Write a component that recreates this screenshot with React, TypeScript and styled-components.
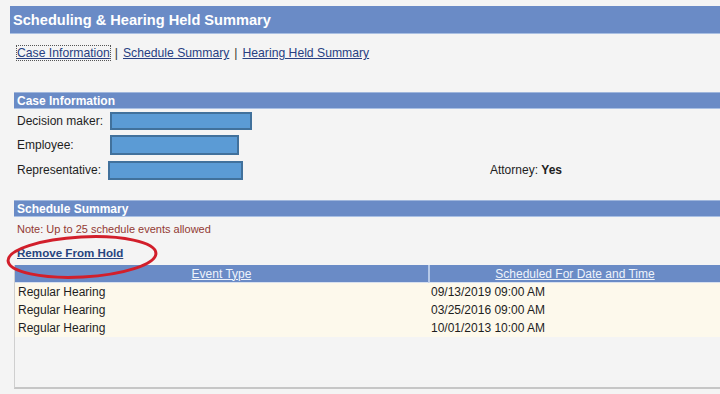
import React from "react";
import styled, { createGlobalStyle } from "styled-components";

const Global = createGlobalStyle`
  html, body { margin: 0; padding: 0; background: #f6f6f6; }
  body { font-family: "Liberation Sans", Arial, sans-serif; color: #222; }
  #root { width: 720px; height: 394px; overflow: hidden; }
`;

const Page = styled.div`
  position: relative;
  width: 720px;
  height: 394px;
  padding: 6px 0 0 10px;
  box-sizing: border-box;
  background: #f4f4f4;
`;

const TitleBar = styled.div`
  height: 28px;
  background: #6a8bc6;
  border-bottom: 1px solid #a9bfe2;
  box-sizing: border-box;
  display: flex;
  align-items: center;
  padding-left: 3px;
  color: #fff;
  font-weight: bold;
  font-size: 14.6px;
`;

const Nav = styled.div`
  margin: 12px 0 0 7px;
  height: 14px;
  display: flex;
  align-items: center;
  gap: 5px;
  font-size: 12.2px;
  color: #333;
`;

const NavLink = styled.a<{ $focused?: boolean }>`
  color: #283f82;
  text-decoration: underline;
  outline: ${(p) => (p.$focused ? "1px dotted #555" : "none")};
  cursor: pointer;
`;

const Body = styled.div`
  margin-left: 4px;
`;

const SectionHeader = styled.div<{ $top: number }>`
  margin-top: ${(p) => p.$top}px;
  height: 17px;
  background: #6a8bc6;
  border-top: 1px solid #9fb6dc;
  border-bottom: 1px solid #a9c0e4;
  box-sizing: border-box;
  display: flex;
  align-items: center;
  padding-left: 3px;
  color: #fff;
  font-weight: bold;
  font-size: 12px;
`;

const FieldRow = styled.div<{ $h: number }>`
  height: ${(p) => p.$h}px;
  display: flex;
  align-items: center;
  padding-left: 3px;
  font-size: 12px;
  color: #1e1e1e;
`;

const Label = styled.span<{ $w: number }>`
  width: ${(p) => p.$w}px;
  flex: none;
`;

const Redacted = styled.div<{ $w: number; $h: number }>`
  width: ${(p) => p.$w}px;
  height: ${(p) => p.$h}px;
  background: #5b9bd5;
  border: 2px solid #41719c;
  box-sizing: border-box;
  flex: none;
`;

const Attorney = styled.span`
  margin-left: auto;
  margin-right: 158px;
  b { font-weight: bold; }
`;

const Note = styled.div`
  margin-top: 5px;
  height: 14px;
  padding-left: 3px;
  font-size: 11px;
  color: #933a33;
  display: flex;
  align-items: center;
`;

const ActionLink = styled.a`
  display: block;
  width: max-content;
  margin: 9px 0 0 3px;
  font-size: 11.6px;
  font-weight: bold;
  color: #27457f;
  text-decoration: underline;
  height: 15px;
  line-height: 15px;
`;

const TablePanel = styled.div`
  margin-top: 5px;
  height: 124px;
  border-left: 1px solid #cfcfcf;
  border-bottom: 2px solid #c6c6c6;
  box-sizing: border-box;
`;

const Table = styled.div`
  display: grid;
  grid-template-columns: 413px 1fr;
`;

const HeadCell = styled.div<{ $divider?: boolean }>`
  height: 18px;
  background: #6a8bc6;
  border-left: ${(p) => (p.$divider ? "2px solid #b6c9e8" : "none")};
  border-bottom: 1px solid #d7e0ef;
  box-sizing: border-box;
  display: flex;
  align-items: center;
  justify-content: center;
  font-size: 12px;
  color: #eef3fb;
  text-decoration: underline;
`;

const Cell = styled.div<{ $pad: number }>`
  height: 18px;
  background: #fdf9ec;
  display: flex;
  align-items: center;
  padding-left: ${(p) => p.$pad}px;
  font-size: 12px;
  color: #1e1e1e;
`;

const Circle = styled.svg`
  position: absolute;
  left: 4px;
  top: 232px;
  pointer-events: none;
`;

const rows = [
  ["Regular Hearing", "09/13/2019 09:00 AM"],
  ["Regular Hearing", "03/25/2016 09:00 AM"],
  ["Regular Hearing", "10/01/2013 10:00 AM"],
];

export default function App() {
  return (
    <>
      <Global />
      <Page>
        <TitleBar>Scheduling &amp; Hearing Held Summary</TitleBar>
        <Nav>
          <NavLink $focused>Case Information</NavLink>|
          <NavLink>Schedule Summary</NavLink>|
          <NavLink>Hearing Held Summary</NavLink>
        </Nav>
        <Body>
          <SectionHeader $top={32}>Case Information</SectionHeader>
          <FieldRow $h={24}>
            <Label $w={93}>Decision maker:</Label>
            <Redacted $w={142} $h={18} />
          </FieldRow>
          <FieldRow $h={24}>
            <Label $w={93}>Employee:</Label>
            <Redacted $w={129} $h={20} />
          </FieldRow>
          <FieldRow $h={26}>
            <Label $w={91}>Representative:</Label>
            <Redacted $w={135} $h={19} />
            <Attorney>
              Attorney: <b>Yes</b>
            </Attorney>
          </FieldRow>
          <SectionHeader $top={17}>Schedule Summary</SectionHeader>
          <Note>Note: Up to 25 schedule events allowed</Note>
          <ActionLink>Remove From Hold</ActionLink>
          <TablePanel>
            <Table>
              <HeadCell>Event Type</HeadCell>
              <HeadCell $divider>Scheduled For Date and Time</HeadCell>
              {rows.map(([a, b], i) => (
                <React.Fragment key={i}>
                  <Cell $pad={3}>{a}</Cell>
                  <Cell $pad={3}>{b}</Cell>
                </React.Fragment>
              ))}
            </Table>
          </TablePanel>
        </Body>
        <Circle width="160" height="50" viewBox="0 0 160 50">
          <ellipse
            cx="78"
            cy="25"
            rx="74"
            ry="20"
            fill="none"
            stroke="#d21f2b"
            strokeWidth="3"
            transform="rotate(-3 78 25)"
          />
        </Circle>
      </Page>
    </>
  );
}
